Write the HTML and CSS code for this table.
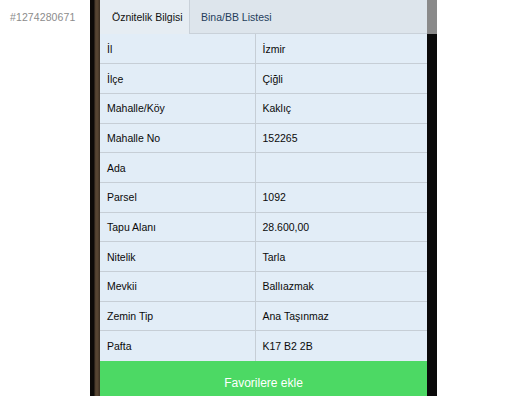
FILE: index.html
```html
<!DOCTYPE html>
<html lang="tr">
<head>
  <meta charset="UTF-8" />
  <meta name="viewport" content="width=device-width, initial-scale=1.0" />
  <title>Parsel Bilgisi</title>
  <link rel="stylesheet" href="styles.css">
</head>
<body>
  <aside class="side">
    <span class="listing-id">#1274280671</span>
  </aside>

  <main class="map">
    <div class="panel">
      <div class="tabs">
        <button class="tab active">Öznitelik Bilgisi</button>
        <button class="tab">Bina/BB Listesi</button>
      </div>

      <table class="attrs">
        <tr><td>İl</td><td>İzmir</td></tr>
        <tr><td>İlçe</td><td>Çiğli</td></tr>
        <tr><td>Mahalle/Köy</td><td>Kaklıç</td></tr>
        <tr><td>Mahalle No</td><td>152265</td></tr>
        <tr><td>Ada</td><td></td></tr>
        <tr><td>Parsel</td><td>1092</td></tr>
        <tr><td>Tapu Alanı</td><td>28.600,00</td></tr>
        <tr><td>Nitelik</td><td>Tarla</td></tr>
        <tr><td>Mevkii</td><td>Ballıazmak</td></tr>
        <tr><td>Zemin Tip</td><td>Ana Taşınmaz</td></tr>
        <tr><td>Pafta</td><td>K17 B2 2B</td></tr>
      </table>

      <button class="fav">Favorilere ekle</button>
    </div>
    <div class="scroll"><span class="thumb"></span></div>
  </main>

  <aside class="side"></aside>
</body>
</html>
```

FILE: styles.css
```css
* {
  margin: 0;
  padding: 0;
  box-sizing: border-box;
  font-family: 'Liberation Sans', Arial, sans-serif;
}

html, body {
  height: 100%;
  overflow: hidden;
}

body {
  display: flex;
  background: #fff;
  color: #111;
}

.side {
  width: 90px;
  flex: none;
}

.side:last-child {
  width: 91px;
}

.listing-id {
  display: block;
  padding: 11px 0 0 10px;
  font-size: 10.5px;
  color: #8c8c8c;
  letter-spacing: 0.1px;
}

/* dark satellite map behind the info panel */
.map {
  display: flex;
  width: 347px;
  flex: none;
  height: 100%;
  padding-left: 10px;
  background: linear-gradient(90deg, #0c0a08 0, #0c0a08 4px, #4a3b2c 5px, #5a4834 7px, #3c2f22 10px);
}

.panel {
  width: 327px;
  display: flex;
  flex-direction: column;
  background: #e2edf7;
}

.tabs {
  display: flex;
  flex: none;
  height: 34px;
  background: #dde5ec;
  border-bottom: 1px solid #c9d1d9;
}

.tab {
  border: none;
  background: none;
  font-size: 10.5px;
  color: #1f3e5c;
  padding: 0 11px;
  height: 100%;
}

.tab.active {
  width: 90px;
  padding: 0 0 0 12px;
  text-align: left;
  color: #111;
  background: #e6edf3;
  border-right: 1px solid #c9d1d9;
  height: 34px;
}

.attrs {
  width: 100%;
  flex: none;
  border-collapse: collapse;
  font-size: 10.5px;
  color: #0a0a0a;
}

.attrs td {
  height: 29.7px;
  border-bottom: 1px solid #c6ced6;
  padding: 0 0 0 7px;
  vertical-align: middle;
}

.attrs td:first-child {
  width: 155px;
  border-right: 1px solid #c6ced6;
}

.attrs tr:last-child td {
  border-bottom: none;
}

.fav {
  height: 44px;
  flex: none;
  border: none;
  background: #4cd964;
  color: #fff;
  font-size: 12px;
}

.scroll {
  width: 10px;
  flex: none;
  background: #0a0a0a;
}

.thumb {
  display: block;
  height: 34px;
  background: #8a8a8a;
}
```
